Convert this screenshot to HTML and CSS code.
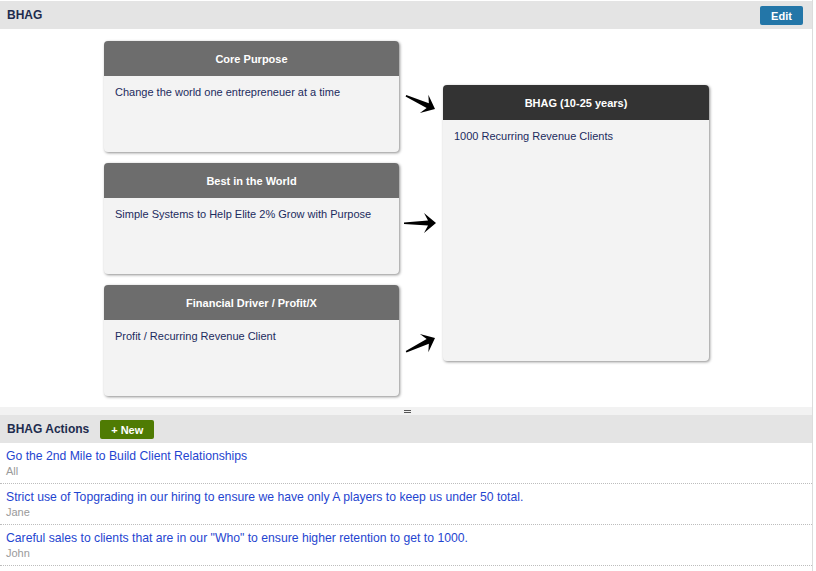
FILE: index.html
```html
<!DOCTYPE html>
<html>
<head>
<meta charset="utf-8">
<title>BHAG</title>
<link rel="stylesheet" href="styles.css">
</head>
<body>
<div class="page">
  <div class="bar">
    <h2 class="bar-title">BHAG</h2>
    <button class="btn btn-edit">Edit</button>
  </div>

  <div class="diagram">
    <div class="card card-1">
      <div class="card-head">Core Purpose</div>
      <div class="card-body">Change the world one entrepreneuer at a time</div>
    </div>
    <svg class="arrow arrow-1" width="44" height="111" viewBox="0 0 44 111">
      <path transform="translate(36 68) rotate(25)" d="M-32,-0.6 L-8,-2.6 L-12,-10 L0,0 L-12,10 L-8,2.6 L-32,1 Z"/>
    </svg>

    <div class="card card-2">
      <div class="card-head">Best in the World</div>
      <div class="card-body">Simple Systems to Help Elite 2% Grow with Purpose</div>
    </div>
    <svg class="arrow arrow-2" width="44" height="111" viewBox="0 0 44 111">
      <path transform="translate(37 60)" d="M-32,-0.6 L-8,-2.6 L-12,-10 L0,0 L-12,10 L-8,2.6 L-32,1 Z"/>
    </svg>

    <div class="card card-3">
      <div class="card-head">Financial Driver / Profit/X</div>
      <div class="card-body">Profit / Recurring Revenue Client</div>
    </div>
    <svg class="arrow arrow-3" width="44" height="111" viewBox="0 0 44 111">
      <path transform="translate(36 53) rotate(-25)" d="M-32,-0.6 L-8,-2.6 L-12,-10 L0,0 L-12,10 L-8,2.6 L-32,1 Z"/>
    </svg>

    <div class="card card-goal">
      <div class="card-head card-head-dark">BHAG (10-25 years)</div>
      <div class="card-body">1000 Recurring Revenue Clients</div>
    </div>
  </div>

  <div class="splitter"><span class="grip"></span></div>

  <div class="bar bar-actions">
    <h2 class="bar-title">BHAG Actions</h2>
    <button class="btn btn-new">+ New</button>
  </div>

  <ul class="actions">
    <li class="action">
      <a class="action-title" href="#">Go the 2nd Mile to Build Client Relationships</a>
      <div class="action-owner">All</div>
    </li>
    <li class="action">
      <a class="action-title" href="#">Strict use of Topgrading in our hiring to ensure we have only A players to keep us under 50 total.</a>
      <div class="action-owner">Jane</div>
    </li>
    <li class="action">
      <a class="action-title" href="#">Careful sales to clients that are in our "Who" to ensure higher retention to get to 1000.</a>
      <div class="action-owner">John</div>
    </li>
  </ul>
</div>
</body>
</html>
```

FILE: styles.css
```css
html, body {
  margin: 0;
  padding: 0;
  background: #fff;
}

body {
  font-family: "Liberation Sans", Arial, Helvetica, sans-serif;
  font-size: 12px;
  color: #1c2b55;
}

.page {
  width: 812px;
  border-right: 1px solid #dcdcdc;
  padding-top: 1px;
  min-height: 570px;
}

.bar {
  height: 28px;
  background: #e4e4e4;
  display: flex;
  align-items: center;
  padding: 0 9px 0 7px;
}

.bar-title {
  margin: 0;
  font-size: 12px;
  font-weight: bold;
  color: #1e2c4e;
  flex: 1;
}

.bar-actions .bar-title {
  flex: 0 0 auto;
  margin-right: 11px;
}

.btn {
  border: 0;
  border-radius: 2px;
  color: #fff;
  font-family: "Liberation Sans", Arial, sans-serif;
  font-weight: bold;
  font-size: 11px;
  height: 19px;
  padding: 0;
  cursor: pointer;
}

.btn-edit {
  width: 43px;
  background: #2376a8;
  margin-top: 1px;
}

.btn-new {
  width: 54px;
  background: #4f7b03;
  margin-top: 1px;
}

.diagram {
  height: 378px;
  box-sizing: border-box;
  padding: 12px 0 11px 104px;
  display: grid;
  grid-template-columns: 295px 44px 266px;
  grid-template-rows: 111px 111px 111px;
  row-gap: 11px;
}

.card {
  background: #f3f3f3;
  border-radius: 4px;
  box-shadow: 1px 1px 3px rgba(0, 0, 0, 0.45);
  overflow: hidden;
}

.card-1 { grid-column: 1; grid-row: 1; }
.card-2 { grid-column: 1; grid-row: 2; }
.card-3 { grid-column: 1; grid-row: 3; }

.card-goal {
  grid-column: 3;
  grid-row: 1 / span 3;
  margin-top: 44px;
  margin-bottom: 35px;
}

.card-head {
  height: 35px;
  line-height: 36px;
  background: #6d6d6d;
  color: #fff;
  font-weight: bold;
  font-size: 11px;
  text-align: center;
}

.card-head-dark {
  background: #333;
}

.card-body {
  padding: 9px 11px;
  font-size: 11px;
  line-height: 14px;
  color: #1c2b5e;
}

.arrow {
  display: block;
  overflow: visible;
  fill: #000;
  grid-column: 2;
}

.arrow-1 { grid-row: 1; }
.arrow-2 { grid-row: 2; }
.arrow-3 { grid-row: 3; }

.splitter {
  height: 8px;
  background: #f2f2f2;
  display: flex;
  justify-content: center;
  align-items: center;
}

.grip {
  width: 7px;
  height: 1px;
  border-top: 1px solid #555;
  border-bottom: 1px solid #555;
  margin-left: 3px;
}

.actions {
  list-style: none;
  margin: 0;
  padding: 0;
}

.action {
  padding: 6px 6px 5px;
  border-bottom: 1px dotted #bdbdbd;
}

.action-title {
  display: block;
  line-height: 15px;
  font-size: 12.2px;
  color: #1f45d0;
  text-decoration: none;
}

.action-owner {
  line-height: 15px;
  font-size: 11px;
  color: #9a9a9a;
  margin-bottom: -1px;
}
```
